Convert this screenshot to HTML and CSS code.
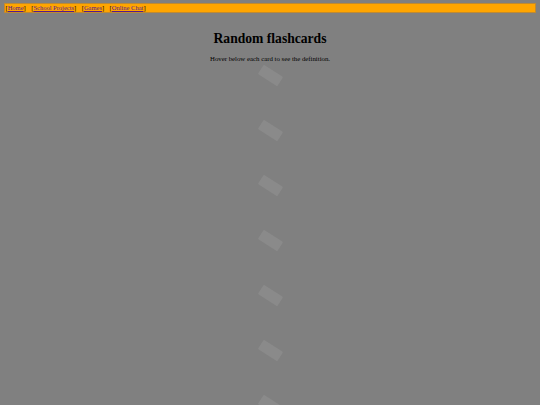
FILE: index.html
```html
<!DOCTYPE html>
<html>
<head>
<meta charset="utf-8">
<link rel="stylesheet" href="styles.css">
</head>
<body>
<div class="nav">
  <span class="item">[<a href="#">Home</a>]</span>
  <span class="item">[<a href="#">School Projects</a>]</span>
  <span class="item">[<a href="#">Games</a>]</span>
  <span class="item">[<a href="#">Online Chat</a>]</span>
</div>
<h1 class="title">Random flashcards</h1>
<p class="sub">Hover below each card to see the definition.</p>
<div class="cards">
  <div class="slot"><div class="card"></div></div>
  <div class="slot"><div class="card"></div></div>
  <div class="slot"><div class="card"></div></div>
  <div class="slot"><div class="card"></div></div>
  <div class="slot"><div class="card"></div></div>
  <div class="slot"><div class="card"></div></div>
  <div class="slot"><div class="card"></div></div>
</div>
</body>
</html>
```
FILE: styles.css
```css
html, body {
  margin: 0;
  padding: 0;
  background: #808080;
  font-family: "Liberation Serif", "Times New Roman", serif;
  color: #000;
  overflow: hidden;
  height: 405px;
}
body {
  padding: 3px 4px 0 4px;
  box-sizing: border-box;
}
.nav {
  background: #ffa500;
  border: 1px solid #c08a30;
  height: 8px;
  font-size: 6.5px;
  line-height: 8px;
  display: flex;
  gap: 5.5px;
  padding-left: 0.5px;
}
.nav a {
  color: #551a8b;
  text-decoration: underline;
}
.title {
  text-align: center;
  font-size: 13.6px;
  font-weight: bold;
  margin: 17px 0 0 0;
  line-height: 17px;
}
.sub {
  text-align: center;
  font-size: 6.8px;
  line-height: 8px;
  margin: 8px 0 0 0;
}
.cards {
  display: flex;
  flex-direction: column;
  align-items: center;
  margin-top: -15px;
  padding-left: 0;
}
.slot {
  height: 55px;
  width: 40px;
  flex: none;
  display: flex;
  align-items: center;
  justify-content: center;
}
.card {
  width: 23px;
  height: 11px;
  background: #8a8a8a;
  transform: rotate(33deg);
  border-radius: 1px;
}
```
